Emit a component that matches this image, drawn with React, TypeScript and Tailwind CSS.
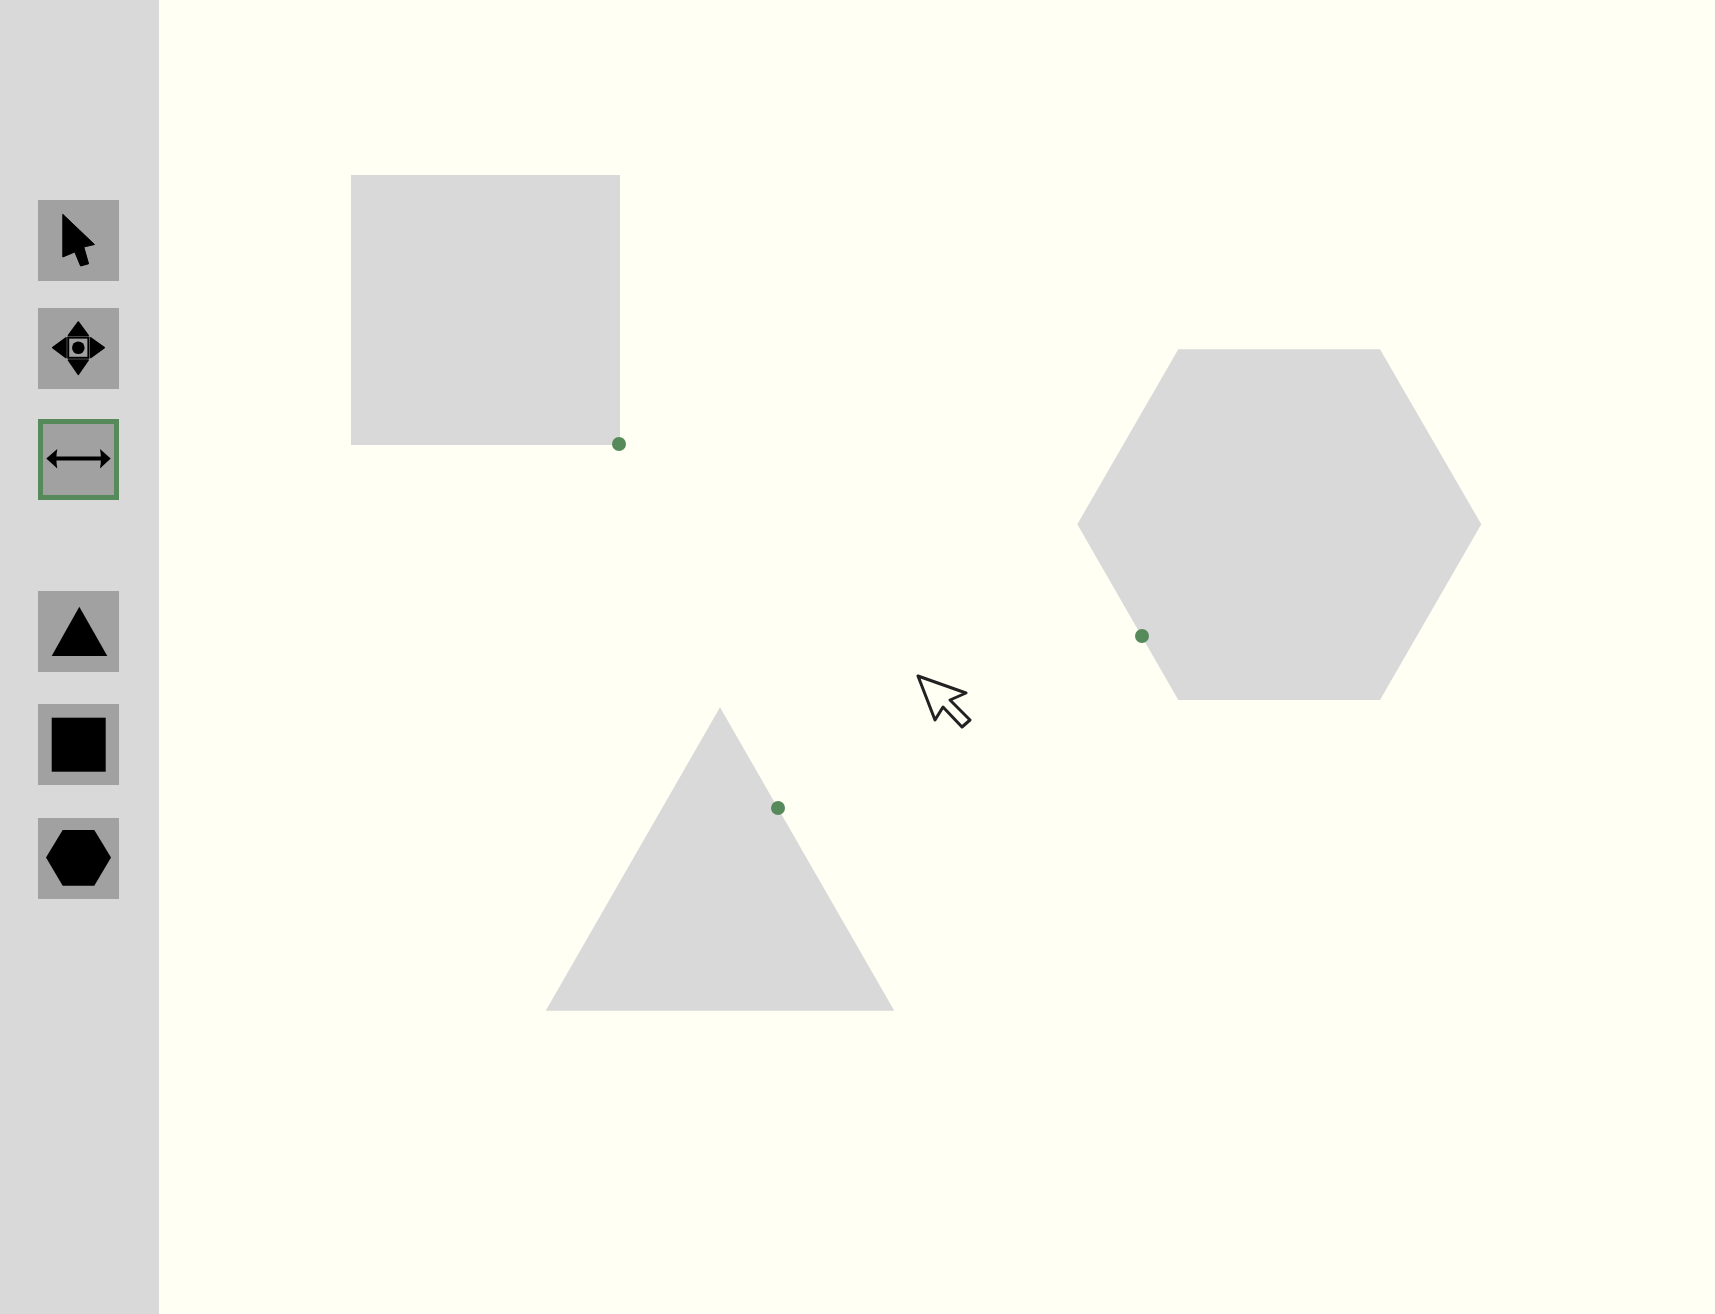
import type { ReactNode } from 'react'

function ToolButton({ children, active, className }: { children: ReactNode; active?: boolean; className?: string }) {
  return (
    <button
      className={`w-[81px] h-[81px] bg-[#a1a1a1] block blur-[0.5px] ${active ? 'border-[5px] border-[#568a5a]' : ''} ${className ?? ''}`}
    >
      {children}
    </button>
  )
}

function Icon({ children, inset }: { children: ReactNode; inset?: boolean }) {
  // active button has a 5px border, so pull the icon back to the button's outer box
  return (
    <svg viewBox="0 0 81 81" className={`w-[81px] h-[81px] block ${inset ? '-m-[5px]' : ''}`}>
      {children}
    </svg>
  )
}

function Handle({ className }: { className: string }) {
  return <div className={`absolute w-[14px] h-[14px] rounded-full bg-[#568a5a] blur-[0.4px] ${className}`} />
}

export default function App() {
  return (
    <div className="flex h-[1314px] w-full bg-[#fffff3] overflow-hidden">
      {/* Toolbar */}
      <div className="w-[159px] shrink-0 bg-[#d9d9d9] pl-[38px] pt-[200px]">
        <ToolButton>
          <Icon>
            <polygon
              points="24.8,14.3 56.5,44.5 45.8,47 50.6,63.8 42.6,66 36.8,52 24.8,57"
              fill="#000"
              stroke="#000"
              strokeWidth="1"
              strokeLinejoin="round"
            />
          </Icon>
        </ToolButton>
        <ToolButton className="mt-[27px]">
          <Icon>
            <g fill="#000" stroke="#000" strokeWidth="1.5" strokeLinejoin="round">
              <polygon points="40.3,14 30.4,27.4 50.2,27.4" />
              <polygon points="40.3,66.4 30.4,52 50.2,52" />
              <polygon points="14.7,39.7 28,29.8 28,49.6" />
              <polygon points="66.3,39.7 52.6,29.8 52.6,49.6" />
            </g>
            <rect x="30.2" y="29.6" width="20.2" height="20.2" fill="#a1a1a1" stroke="#000" strokeWidth="2" />
            <circle cx="40.3" cy="39.7" r="6.3" fill="#000" />
          </Icon>
        </ToolButton>
        <ToolButton active className="mt-[30px]">
          <Icon inset>
            <rect x="15" y="37.5" width="51" height="4" fill="#000" />
            <path d="M8.3,39.5 L19.3,30 Q17.5,39.5 19.3,49.5 Z" fill="#000" />
            <path d="M72.7,39.5 L62,30 Q63.8,39.5 62,49.5 Z" fill="#000" />
          </Icon>
        </ToolButton>
        <ToolButton className="mt-[91px]">
          <Icon>
            <polygon points="41.3,15.7 69.3,65 13.7,65" fill="#000" />
          </Icon>
        </ToolButton>
        <ToolButton className="mt-[32px]">
          <Icon>
            <rect x="13.7" y="13.7" width="54" height="54" fill="#000" />
          </Icon>
        </ToolButton>
        <ToolButton className="mt-[33px]">
          <Icon>
            <polygon points="8,39.5 24.7,12 56.3,12 73,39.5 56.3,67.7 24.7,67.7" fill="#000" />
          </Icon>
        </ToolButton>
      </div>

      {/* Canvas */}
      <div className="relative flex-1">
        <div className="absolute left-[192px] top-[175px] w-[269px] h-[270px] bg-[#d9d9d9] blur-[0.4px]" />
        <Handle className="left-[453px] top-[437px]" />

        <svg className="absolute left-[918px] top-[349px] blur-[0.4px]" width="405" height="352" viewBox="0 0 405 352">
          <polygon points="0.3,175.3 101.3,0.3 303,0.3 404.3,175.3 303,351 101.3,351" fill="#d9d9d9" />
        </svg>
        <Handle className="left-[976px] top-[629px]" />

        <svg className="absolute left-[386px] top-[707px] blur-[0.4px]" width="350" height="304" viewBox="0 0 350 304">
          <polygon points="175,0.3 349.3,303.7 0.7,303.7" fill="#d9d9d9" />
        </svg>
        <Handle className="left-[612px] top-[801px]" />

        {/* Mouse pointer */}
        <svg className="absolute left-[751px] top-[668px] blur-[0.5px]" width="70" height="70" viewBox="0 0 70 70">
          <polygon
            points="8,8 56,25 40,32 60,52 52,59 33,39 25,52"
            fill="#fffff3"
            stroke="#222"
            strokeWidth="3"
            strokeLinejoin="round"
          />
        </svg>
      </div>
    </div>
  )
}
